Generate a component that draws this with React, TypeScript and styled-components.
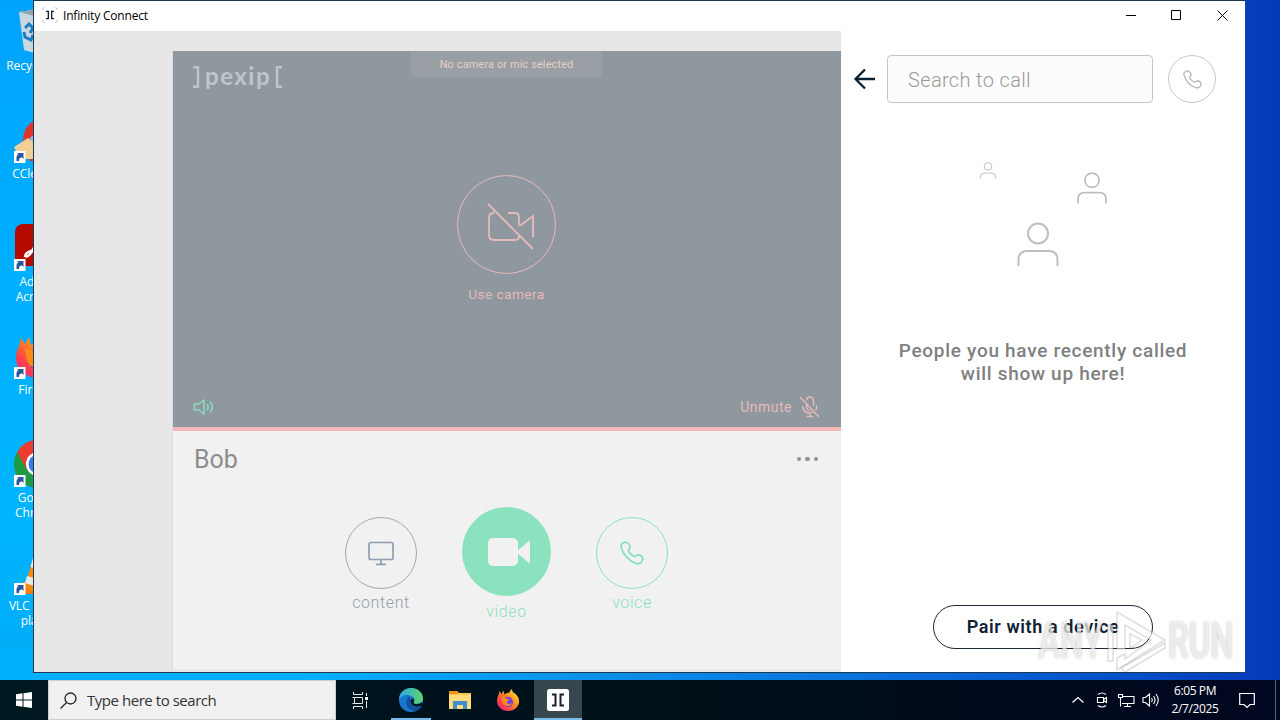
import type { ReactNode } from 'react'
import styled, { createGlobalStyle } from 'styled-components'

const GlobalStyle = createGlobalStyle`
  * { box-sizing: border-box; }
  body {
    margin: 0;
    overflow: hidden;
    font-family: "Open Sans", "Noto Sans", sans-serif;
  }
  svg { display: block; flex: none; }
`
const Screen = styled.div`
  position: relative;
  display: flex;
  flex-direction: column;
  width: 1280px;
  height: 720px;
  overflow: hidden;
`
const Desktop = styled.div`
  height: 680px;
  background:
    linear-gradient(90deg, transparent 1245px, #053fbd 1245px, #0439b3 100%),
    linear-gradient(90deg, #00b0fd 0, #00b0fa 300px, #0894ec 560px, #0a73dc 850px, #0553c9 1100px, #053fbb 1245px);
`
const IconColumn = styled.div`
  display: flex;
  flex-direction: column;
  width: 76px;
  background: linear-gradient(#00a3fb, #00b0ff 45%, #00b4ff 80%, #00aef8);
`
const DesktopItem = styled.div`
  display: flex;
  flex-direction: column;
  align-items: center;
  height: 108px;
  padding-top: 8px;
  gap: 2px;
`
const Picture = styled.div`
  display: grid;
  height: 48px;
  margin-left: -1px;
  > svg { grid-area: 1 / 1; }
`
const Label = styled.span<{ spacing?: number }>`
  width: 74px;
  margin-left: -1px;
  font-size: 12px;
  line-height: 15px;
  letter-spacing: ${p => p.spacing ?? 0}px;
  text-align: center;
  color: #fff;
`

/* window */
const AppWindow = styled.div`
  position: absolute;
  left: 33px;
  top: 0;
  display: flex;
  flex-direction: column;
  width: 1213px;
  height: 673px;
  border: 1px solid #1d3a52;
  border-right-color: #0a4ba8;
  background: #fff;
`
const TitleBar = styled.div`
  display: flex;
  align-items: center;
  flex: none;
  height: 30px;
  padding: 0 0 2px 8px;
  font-size: 12px;
  color: #000;
`
const Title = styled.span`
  flex: 1;
  margin-left: 5px;
  letter-spacing: -0.18px;
`
const WindowButton = styled.div<{ last?: boolean }>`
  display: flex;
  justify-content: center;
  width: ${p => (p.last ? 46 : 45)}px;
`
const Body = styled.div`
  display: flex;
  flex: 1;
  font-family: Roboto, "Liberation Sans", sans-serif;
`
const Backdrop = styled.div`
  flex: none;
  width: 807px;
  padding: 20px 0 3px 138px;
  background: #e7e7e7;
`
const Stage = styled.div`
  display: flex;
  flex-direction: column;
  height: 618px;
  background: #f1f1f1;
  border-left: 1px solid #dcdcdc;
`
const Video = styled.div`
  display: grid;
  grid-template-rows: 124px 1fr 40px;
  height: 380px;
  border-bottom: 4px solid #f5b8b8;
  background: #8f989f;
`
const VideoTop = styled.div`
  display: grid;
  grid-template-columns: 238px 191px 1fr;
  align-items: start;
`
const Logo = styled.div`
  display: flex;
  align-items: center;
  gap: 5px;
  padding: 11px 0 0 20px;
  height: 41px;
  color: #c0c5c9;
`
const LogoName = styled.span`
  font-family: Lato, sans-serif;
  font-size: 24px;
  font-weight: 700;
  letter-spacing: 1.5px;
  line-height: 26px;
  margin-right: -1px;
  margin-top: -3px;
`
const Notice = styled.div`
  height: 26px;
  border-radius: 0 0 2px 2px;
  background: #999fa4;
  color: #e6cfc6;
  font-size: 11px;
  line-height: 27px;
  letter-spacing: 0.1px;
  text-align: center;
`
const CameraArea = styled.div`
  display: flex;
  flex-direction: column;
  align-items: center;
  gap: 13px;
  margin-right: 1px;
  color: #e8b9ba;
  font-size: 13.5px;
  line-height: 15px;
  letter-spacing: 0.5px;
`
const Round = styled.div<{ size: number; border: string; fill?: string }>`
  display: grid;
  place-items: center;
  flex: none;
  width: ${p => p.size}px;
  height: ${p => p.size}px;
  border: 1px solid ${p => p.border};
  border-radius: 50%;
  background: ${p => p.fill ?? 'transparent'};
`
const VideoFooter = styled.div`
  display: flex;
  align-items: center;
  padding: 0 20px;
`
const Unmute = styled.div`
  display: flex;
  align-items: center;
  gap: 7px;
  margin-left: auto;
  color: #e8b9ba;
  font-size: 14px;
  letter-spacing: 0.5px;
`
const NameRow = styled.div`
  display: flex;
  align-items: center;
  justify-content: space-between;
  height: 56px;
  padding: 0 23px 0 21px;
  color: #8d8d8d;
  font-size: 25px;
`
const Dots = styled.div`
  display: flex;
  gap: 4px;
  i {
    width: 4.5px;
    height: 4.5px;
    border-radius: 50%;
    background: #8e9296;
  }
`
const CallActions = styled.div`
  display: flex;
  justify-content: center;
  align-items: flex-start;
  gap: 45px;
  padding: 20px 1px 0 0;
`
const CallAction = styled.div<{ color: string; small?: boolean }>`
  display: flex;
  flex-direction: column;
  align-items: center;
  gap: ${p => (p.small ? 5 : 7)}px;
  padding-top: ${p => (p.small ? 10 : 0)}px;
  color: ${p => p.color};
  font-size: 16px;
  font-weight: 300;
  line-height: 17px;
  letter-spacing: 0.6px;
`

/* right side */
const Sidebar = styled.div`
  display: flex;
  flex-direction: column;
  align-items: center;
  flex: 1;
  padding-bottom: 23px;
`
const SearchRow = styled.div`
  display: flex;
  align-items: center;
  align-self: stretch;
  padding: 24px 0 0 12px;
`
const SearchBox = styled.div`
  width: 266px;
  height: 48px;
  margin: 0 15px 0 10px;
  padding-left: 20px;
  border: 1px solid #c4c4c4;
  border-radius: 4px;
  background: #fcfcfc;
  color: #9a9a9a;
  font-size: 20px;
  font-weight: 300;
  line-height: 48px;
  letter-spacing: 0.35px;
`
const People = styled.div`
  display: grid;
  grid-template-columns: 37px 60px 30px;
  align-items: start;
  margin-top: 59px;
  height: 108px;
  color: #bfbfbf;
`
const Person = styled.div<{ drop: number }>`
  padding-top: ${p => p.drop}px;
`
const EmptyText = styled.p`
  flex: 1;
  margin: 69px 0 0;
  color: #808080;
  font-size: 19px;
  font-weight: 500;
  line-height: 23px;
  letter-spacing: 0.7px;
  text-align: center;
`
const PairButton = styled.div`
  width: 220px;
  height: 44px;
  border: 1px solid #1b2a36;
  border-radius: 22px;
  color: #0f2233;
  font-size: 18px;
  font-weight: 600;
  line-height: 42px;
  letter-spacing: 0.6px;
  text-align: center;
`
const Watermark = styled.div`
  position: absolute;
  left: 1038px;
  top: 609px;
  display: flex;
  align-items: center;
  width: 196px;
  height: 64px;
`
const Mark = styled.span<{ width: number }>`
  display: block;
  width: ${p => p.width}px;
  white-space: nowrap;
  font: 500 50px/64px Roboto, sans-serif;
  color: rgba(255, 255, 255, 0.7);
  text-shadow: 0 0 3px rgba(0, 0, 0, 0.28);
  transform: scaleX(0.66);
  transform-origin: left;
`

/* taskbar */
const Taskbar = styled.div`
  display: flex;
  height: 40px;
  background: linear-gradient(90deg, #001820, #001019 55%, #000b1c 75%, #000720);
  color: #fff;
`
const Task = styled.div<{ width: number; active?: boolean; running?: boolean }>`
  display: grid;
  place-items: center;
  width: ${p => p.width}px;
  background: ${p => (p.active ? '#37474f' : 'transparent')};
`
// underline of an open program, narrower than its button unless focused
const Running = styled(Task)<{ inset: number }>`
  background-image: linear-gradient(#76b9ed, #76b9ed);
  background-repeat: no-repeat;
  background-position: center bottom;
  background-size: calc(100% - ${p => p.inset * 2}px) 2px;
`
const TaskSearch = styled.div`
  display: flex;
  align-items: center;
  gap: 10px;
  width: 288px;
  padding-left: 11px;
  border: 1px solid #cfcfcf;
  background: #f1f1f1;
  color: #333;
  font-size: 15px;
`
const SearchText = styled.span`
  letter-spacing: -0.46px;
`
const Tray = styled.div`
  display: flex;
  align-items: center;
  gap: 7px;
  margin-left: auto;
`
const Clock = styled.div`
  width: 52px;
  font-size: 12px;
  line-height: 18px;
  letter-spacing: -0.4px;
  text-align: center;
`
const ShowDesktop = styled.div`
  width: 5px;
  height: 40px;
  margin-left: 13px;
  border-left: 1px solid #5a6472;
`
// nudges an icon off the centre of its slot
const Shift = styled.div<{ x: number; y?: number }>`
  margin-left: ${p => p.x}px;
  margin-top: ${p => p.y ?? 0}px;
`

const Shortcut = () => (
  <svg width="48" height="48" viewBox="0 0 48 48">
    <path d="M0 35h11.500v12H0z" fill="#fff" />
    <path d="M2.500 45v-3.500c0-2 1-3 3-3H4L3.500 37h6v6L8 41.500c-2-.5-3 1-3 3.500z" fill="#2a559c" />
  </svg>
)

const RecycleIcon = () => (
  <svg width="48" height="48" viewBox="0 0 48 48">
    <path d="M5 4 24 1l20 3-5 38-15 4-14-4z" fill="#c9d8e0" />
    <path d="M5 4 24 1l20 3-20 5z" fill="#92a4ad" />
    <path d="m11 20 4-4 4 4-3 5m3 2-2 5-6-3-1-5m13 6h-4" fill="none" stroke="#167cc4" strokeWidth="3" />
  </svg>
)
const CCleanerIcon = () => (
  <svg width="48" height="48" viewBox="0 0 48 48">
    <path d="M9 25C9 13 15 5 28 2l10 43H16z" fill="#e03529" />
    <path d="M14 25q4-8 14-9v12H16z" fill="#8eb7dc" />
    <path d="m0 31 14-9 5 4 9-1v18H6z" fill="#f3cf98" />
  </svg>
)
const AcrobatIcon = () => (
  <svg width="48" height="48" viewBox="0 0 48 48">
    <rect x="1" width="46" height="42" rx="8" fill="#b30b00" />
    <path d="M22 8c-4 8 9 21 17 18-4-3-27-1-28 6 5 4 14-17 13-24" fill="none" stroke="#fff" strokeWidth="2.400" />
  </svg>
)
const FirefoxIcon = ({ size }: { size: number }) => (
  <svg width={size} height={size} viewBox="0 0 48 48">
    <defs>
      <linearGradient id="fox" x1="1" y1="0" x2="0" y2="1">
        <stop offset="0" stopColor="#fff44f" />
        <stop offset=".4" stopColor="#ff9419" />
        <stop offset=".75" stopColor="#ff3c51" />
        <stop offset="1" stopColor="#e31587" />
      </linearGradient>
    </defs>
    <path d="M5 14 7 6l4 6 4-7 2 8q5-4 10-4 0-4 5-7 0 6 6 9 9 7 8 18c-2 11-11 17-22 17S2 38 2 26c0-5 1-8 3-12z" fill="url(#fox)" />
    <path d="M16 20c7-6 18-1 18 8 0 7-5 10-10 10-6 0-10-5-9-10l7-2z" fill="#7542e5" />
    <path d="M11 17c5 0 7 1 9 4l7 2-5 4c-2 5 5 7 10 3-3 7-13 8-17 2-3-5-3-10-4-15z" fill="#ff8a16" />
  </svg>
)
const ChromeIcon = () => (
  <svg width="48" height="48" viewBox="0 0 48 48">
    <circle cx="24" cy="24" r="24" fill="#1e9a43" />
    <path d="M3.200 12A24 24 0 0 1 45 12H24l-11 18z" fill="#ea3c30" />
    <path d="M45 12A24 24 0 0 1 24 48l11-18-5-18z" fill="#fbc116" />
    <circle cx="24" cy="24" r="12" fill="#fff" />
    <circle cx="24" cy="24" r="9.500" fill="#3279eb" />
  </svg>
)
const VlcIcon = () => (
  <svg width="48" height="48" viewBox="0 0 48 48">
    <path d="M9 34h30l6 12H7z" fill="#f57c08" />
    <path d="M22 1h4l12 39q-14 6-28 0z" fill="#f58a13" />
    <path d="m19.500 8-3 11q7 3 15 0l-3-11zM13 28l-2 7q13 6 26 0l-2-7q-11 4-22 0z" fill="#e9e9e9" />
  </svg>
)

const BrandBrackets = ({ size, bg }: { size: number; bg?: string }) => (
  <svg width={size} height={size} viewBox="0 0 24 24">
    {bg && <rect x="1" y="1" width="22" height="22" rx="2.500" fill={bg} />}
    {!bg && <path d="M1 4q0-3 3-3M20 1q3 0 3 3M23 20q0 3-3 3M4 23q-3 0-3-3" fill="none" stroke="#8d97b5" />}
    <path d="M6 6.500h3.500v11H6M18 6.500h-3.500v11H18" fill="none" stroke="#15212c" strokeWidth="2" />
  </svg>
)
const Bracket = ({ open }: { open?: boolean }) => (
  <svg width="7" height="22" viewBox="0 0 7 22">
    <path d={open ? 'M7 1.200H2v19.600h5' : 'M0 1.200h5v19.600H0'} fill="none" stroke="currentColor" strokeWidth="2.400" />
  </svg>
)
const CameraOff = () => (
  <svg width="50" height="50" viewBox="0 0 50 50" fill="none" stroke="#e8b9ba" strokeWidth="1.800">
    <path d="m3 3 45 45M9 12q-5 0-5 5v17q0 5 5 5h21q4 0 4-4M23 12h7q4 0 4 4v7q0 2 2 1l12-9v21" />
  </svg>
)
const MicOff = () => (
  <svg width="22" height="22" viewBox="0 0 22 22" fill="none" stroke="#e8b9ba" strokeWidth="1.400">
    <path d="m1 1 19 20M7.500 4.500Q8 1 11 1t3.500 4v5M7.500 8v3q.5 3.500 4 3.500M4 10v2q1 5 7 5 2 0 3-.7M17.500 9v3q0 1.500-1 2.500M11 17v3.500M7.500 20.500h7" />
  </svg>
)
const Speaker = ({ size, color }: { size: number; color: string }) => (
  <svg width={size} height={size} viewBox="0 0 22 22" fill="none" stroke={color} strokeWidth="1.500">
    <path d="M1.500 8v6H6l5 4V4L6 8zM14 8q2.500 3 0 6M17 5.500q4.500 5.500 0 11" strokeLinejoin="round" />
  </svg>
)
const TraySpeaker = () => (
  <svg width="18" height="16" viewBox="0 0 18 16" fill="none" stroke="#fff" strokeWidth="1.100">
    <path d="M1 5.500v5h2.500l4 3.500V2l-4 3.500zM9.500 6q1.500 2 0 4M11.500 4q3 4 0 8M14 2q4.500 6 0 12" />
  </svg>
)
const Monitor = () => (
  <svg width="26" height="25" viewBox="0 0 26 25" fill="none" stroke="#8e9eb1" strokeWidth="1.700">
    <rect x="1" y="1.500" width="24" height="17" rx="2" />
    <path d="M13 18.500v4.500M8 23.300h10" />
  </svg>
)
const CameraFull = () => (
  <svg width="44" height="30" viewBox="0 0 44 30" fill="#f1f1f1">
    <rect x="1" y="1" width="30" height="28" rx="5" />
    <path d="m29 15 13-11q1-.5 1 .5v21q0 1-1 .5z" />
  </svg>
)
const Handset = ({ size, color, stroke = 1.6 }: { size: number; color: string; stroke?: number }) => (
  <svg width={size} height={size} viewBox="0 0 24 24" fill="none" stroke={color} strokeWidth={stroke} strokeLinejoin="round">
    <path d="M2 2.800Q5-.3 8.300 2.500q3.200 3 .8 5.600-1.300 1.500.2 3.300l3.600 3.300q1.500 1.300 3.200.2 3-2.200 5.700.5 2.300 2.800-.6 6-1.600 1.800-5.200 1C9 20 3 13.500 1.300 6.500.8 4.300 1 3.600 2 2.800z" />
  </svg>
)
const PersonIcon = ({ size, stroke }: { size: number; stroke: number }) => (
  <svg width={size} height={size * 1.06} viewBox="0 0 42 44.500" fill="none" stroke="currentColor" strokeWidth={stroke}>
    <circle cx="21" cy="11.500" r="10" />
    <path d="M1.500 44v-6q0-9 9-9h21q9 0 9 9v6" />
  </svg>
)
const PlayMark = () => (
  <svg width="62" height="64" viewBox="0 0 62 64" fill="rgba(255,255,255,.6)" stroke="rgba(90,90,90,.2)" strokeWidth="1.500">
    <path d="M2 16h5v36H2zM11 3l48 28-48 30v-12l8-4v5l26-19-26-15v24h-8z" />
    <path d="m24 25 12 6-12 8zM15 59l44-25v5L19 63z" />
  </svg>
)

const desktopItems: { label: string; icon: ReactNode; link?: boolean; spacing?: number }[] = [
  { label: 'Recycle Bin', icon: <RecycleIcon /> },
  { label: 'CCleaner', icon: <CCleanerIcon />, link: true },
  { label: 'Adobe Acrobat', icon: <AcrobatIcon />, link: true },
  { label: 'Firefox', icon: <FirefoxIcon size={48} />, link: true },
  { label: 'Google Chrome', icon: <ChromeIcon />, link: true },
  { label: 'VLC media player', icon: <VlcIcon />, link: true, spacing: -0.2 },
]

export default function App() {
  return (
    <Screen>
      <GlobalStyle />
      <Desktop>
        <IconColumn>
          {desktopItems.map(item => (
            <DesktopItem key={item.label}>
              <Picture>
                {item.icon}
                {item.link && <Shortcut />}
              </Picture>
              <Label spacing={item.spacing}>{item.label}</Label>
            </DesktopItem>
          ))}
        </IconColumn>
      </Desktop>

      <AppWindow>
        <TitleBar>
          <BrandBrackets size={16} />
          <Title>Infinity Connect</Title>
          <WindowButton>
            <svg width="11" height="11"><path d="M0 5.500h10" stroke="#000" /></svg>
          </WindowButton>
          <WindowButton>
            <svg width="11" height="11"><path d="M.5.5h9v9h-9z" stroke="#000" fill="none" /></svg>
          </WindowButton>
          <WindowButton last>
            <svg width="11" height="11"><path d="m.5.500 10 10m0-10-10 10" stroke="#000" /></svg>
          </WindowButton>
        </TitleBar>
        <Body>
          <Backdrop>
            <Stage>
              <Video>
                <VideoTop>
                  <Logo>
                    <Bracket />
                    <LogoName>pexip</LogoName>
                    <Bracket open />
                  </Logo>
                  <Notice>No camera or mic selected</Notice>
                </VideoTop>
                <CameraArea>
                  <Round size={99} border="#e8b9ba">
                    <Shift x={7} y={2}><CameraOff /></Shift>
                  </Round>
                  Use camera
                </CameraArea>
                <VideoFooter>
                  <Speaker size={22} color="#8bdabd" />
                  <Unmute>
                    Unmute
                    <MicOff />
                  </Unmute>
                </VideoFooter>
              </Video>
              <NameRow>
                Bob
                <Dots><i /><i /><i /></Dots>
              </NameRow>
              <CallActions>
                <CallAction color="#93a0ae" small>
                  <Round size={72} border="#a4a7aa"><Monitor /></Round>
                  content
                </CallAction>
                <CallAction color="#8be2be">
                  <Round size={89} border="#8be2be" fill="#8be2be">
                    <Shift x={5} y={1}><CameraFull /></Shift>
                  </Round>
                  video
                </CallAction>
                <CallAction color="#8be2be" small>
                  <Round size={72} border="#8be2be"><Handset size={24} color="#7fdfb7" /></Round>
                  voice
                </CallAction>
              </CallActions>
            </Stage>
          </Backdrop>

          <Sidebar>
            <SearchRow>
              <svg width="24" height="24" viewBox="0 0 24 24" fill="none" stroke="#0c2236" strokeWidth="2.300">
                <path d="M22 12H3M12 2.500 2.500 12l9.500 9.500" />
              </svg>
              <SearchBox>Search to call</SearchBox>
              <Round size={48} border="#c8c8c8"><Handset size={19} color="#b3b3b3" /></Round>
            </SearchRow>
            <People>
              <Person drop={0}><PersonIcon size={16} stroke={2.6} /></Person>
              <Person drop={60}><PersonIcon size={42} stroke={2} /></Person>
              <Person drop={10}><PersonIcon size={30} stroke={2.4} /></Person>
            </People>
            <EmptyText>
              People you have recently called
              <br />
              will show up here!
            </EmptyText>
            <PairButton>Pair with a device</PairButton>
          </Sidebar>
        </Body>
      </AppWindow>

      <Watermark>
        <Mark width={68}>ANY</Mark>
        <PlayMark />
        <Mark width={62}>RUN</Mark>
      </Watermark>

      <Taskbar>
        <Task width={48}>
          <svg width="16" height="16" viewBox="0 0 16 16" fill="#fff">
            <path d="M0 2.300 6.500 1.300v6.200H0zM7.500 1.200 16 0v7.500H7.500zM0 8.500h6.500v6.200L0 13.700zM7.500 8.500H16V16l-8.500-1.200z" />
          </svg>
        </Task>
        <TaskSearch>
          <svg width="17" height="17" viewBox="0 0 17 17" fill="none" stroke="#222" strokeWidth="1.300">
            <circle cx="10.500" cy="6.500" r="5.500" />
            <path d="M6.500 10.500.5 16.500" />
          </svg>
          <SearchText>Type here to search</SearchText>
        </TaskSearch>
        <Task width={48}>
          <svg width="17" height="17" viewBox="0 0 17 17" fill="none" stroke="#e8ecee">
            <path d="M1.500 0v2.500h9V0M1.500 17v-2.500h9V17M2.500 5.500h8v6h-8zM.5 5.500h2M.5 11.500h2M14.500 1v3M14.500 9v7" />
            <path d="M13 5h3v3h-3z" fill="#fff" stroke="none" />
          </svg>
        </Task>
        <Running width={54} inset={7}>
          <svg width="24" height="24" viewBox="0 0 24 24">
            <defs>
              <linearGradient id="edge">
                <stop offset="0" stopColor="#2ba8e8" />
                <stop offset="1" stopColor="#5fd668" />
              </linearGradient>
            </defs>
            <circle cx="12" cy="12" r="12" fill="#1679cf" />
            <path d="M0 12C0 5 5 0 12 0s12 5 12 10c0 4-3 6-7 6-3 0-3-1-2-2 2-5-3-7-7-7-4 0-7 2-8 5z" fill="url(#edge)" />
            <path d="M9 9c-4 6-1 13 7 14 4-1 6-4 7-6-5 3-12 1-12-4 0-1 0-2 1-3z" fill="#164f9b" />
            <path d="M11.500 13c0-3 4-3 3.500 0-1 2 0 3 2 3 3 0 5-1 6-2l.5 3c-5 3-12 1-12-4z" fill="#001820" />
          </svg>
        </Running>
        <Task width={44}>
          <svg width="22" height="19" viewBox="0 0 22 19">
            <path d="M0 0h8l2 2h12v16H0z" fill="#f7c64d" />
            <path d="M0 4h22v14H0z" fill="#ffdc79" />
            <path d="M0 0h8l1 3H0z" fill="#e5941e" />
            <path d="M4 18v-8h14v8h-4v-4H8v4z" fill="#3f8fd0" />
          </svg>
        </Task>
        <Task width={52}><FirefoxIcon size={24} /></Task>
        <Running width={48} active inset={0}><BrandBrackets size={24} bg="#fff" /></Running>
        <Tray>
          <svg width="12" height="8" fill="none" stroke="#fff" strokeWidth="1.200"><path d="m.5 6.500 5.500-5 5.500 5" /></svg>
          <Shift x={5}>
            <svg width="12" height="16" viewBox="0 0 12 16" fill="none" stroke="#fff" strokeWidth="1.100">
              <path d="M1.500 5.500h6v5h-6zM7.500 7.500l3-2v5l-3-2M2 2.500q4-3 8 0M2 13.500q4 3 8 0" />
            </svg>
          </Shift>
          <Shift x={3}>
            <svg width="17" height="15" viewBox="0 0 17 15" fill="none" stroke="#fff" strokeWidth="1.100">
              <path d="M5 3.500h11v7H4M9.500 10.500v3M6 13.500h7M.5 1.500h4v3h-4zM2.500 4.500v9" />
            </svg>
          </Shift>
          <TraySpeaker />
          <Shift x={2}>
            <Clock>6:05 PM<br />2/7/2025</Clock>
          </Shift>
          <Shift x={11}>
            <svg width="16" height="17" viewBox="0 0 16 17" fill="none" stroke="#fff" strokeWidth="1.200">
              <path d="M.7 1.500h14.600v11H11l-3 3-3-3H.7z" />
            </svg>
          </Shift>
          <ShowDesktop />
        </Tray>
      </Taskbar>
    </Screen>
  )
}
